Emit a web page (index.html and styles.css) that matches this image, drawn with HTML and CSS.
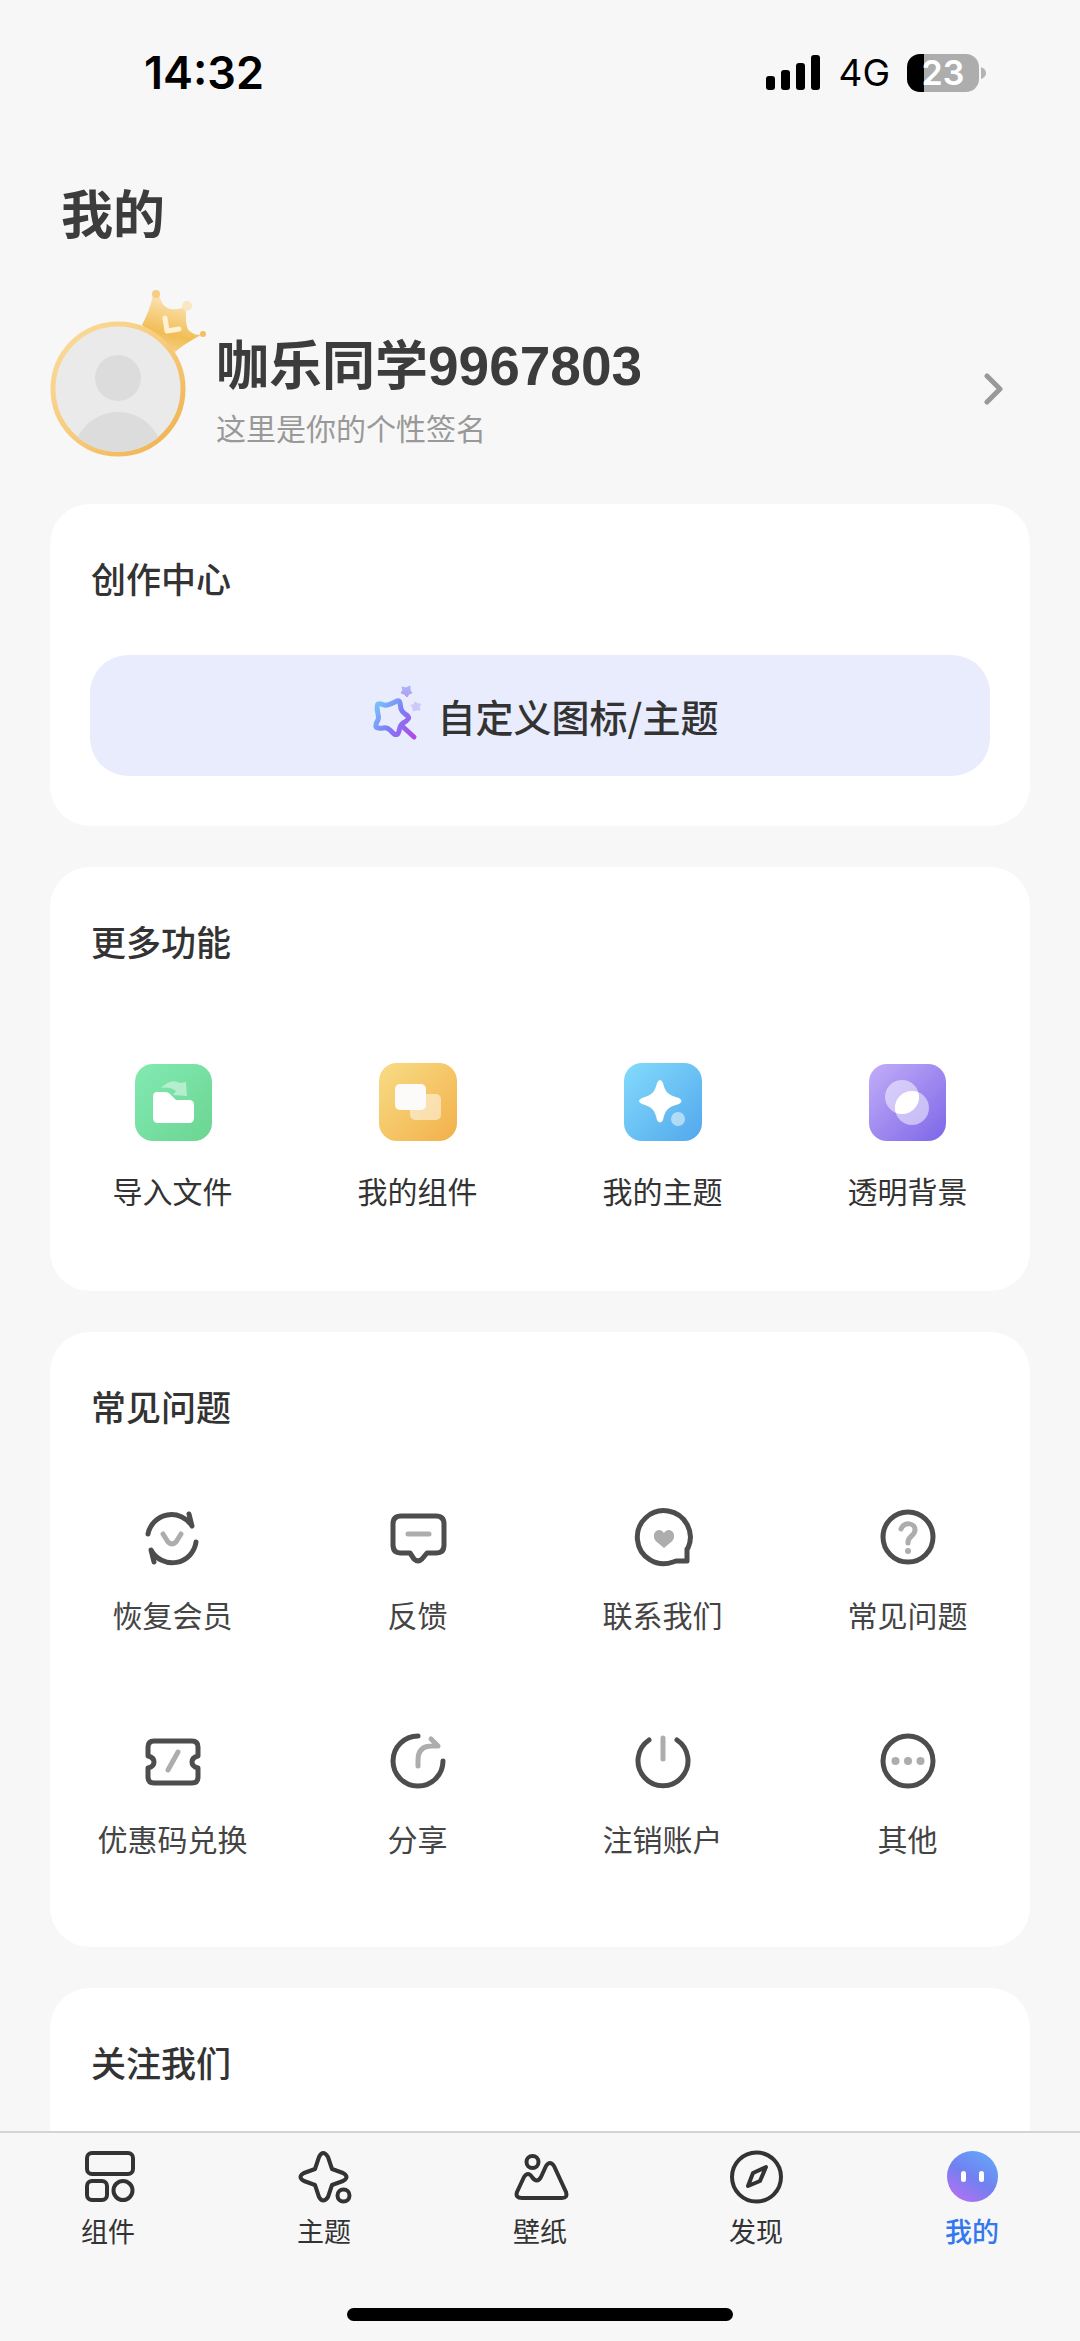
FILE: index.html
```html
<!DOCTYPE html>
<html lang="zh-CN">
<head>
<meta charset="utf-8">
<meta name="viewport" content="width=device-width, initial-scale=1">
<title>我的</title>
<link rel="stylesheet" href="styles.css">
</head>
<body>
<div class="status">
  <span class="time">14:32</span>
  <div class="status-right">
    <svg class="signal" viewBox="0 0 55 36" aria-hidden="true"><rect y="21" width="9" height="14" rx="3"/><rect x="15" y="15" width="9" height="20" rx="3"/><rect x="30" y="8" width="9" height="27" rx="3"/><rect x="45" width="9" height="35" rx="3"/></svg>
    <span class="network">4G</span>
    <div class="battery"><span class="battery-level">23</span></div>
    <svg class="battery-cap" viewBox="0 0 5 12" aria-hidden="true"><path d="M0 0Q5 2 5 6T0 12z"/></svg>
  </div>
</div>

<main class="content">
  <h1 class="page-title">我的</h1>

  <a class="profile" href="#profile">
    <svg class="avatar" viewBox="0 0 158 168" aria-hidden="true">
      <defs>
        <linearGradient id="ring" x1="0" y1="0" x2="1" y2="1"><stop offset="0" stop-color="#f9dc9f"/><stop offset=".5" stop-color="#f7cb7b"/><stop offset="1" stop-color="#efae4c"/></linearGradient>
        <linearGradient id="crown" x1=".65" y1="0" x2=".4" y2="1"><stop offset="0" stop-color="#fcebcb"/><stop offset=".3" stop-color="#f8d692"/><stop offset=".7" stop-color="#f1bd55"/><stop offset="1" stop-color="#f6d188"/></linearGradient>
        <clipPath id="face"><circle cx="68" cy="99" r="63"/></clipPath>
      </defs>
      <path d="M92 35Q100 20 103 5L109 5Q112 17 120 19Q127 20 132 18L136 20Q135 40 141 42Q144 45 151 45Q134 54 125 62z" fill="url(#crown)"/>
      <circle cx="106" cy="4" r="4" fill="#f6cd84"/><circle cx="137" cy="16" r="5" fill="#fbe6c2"/><circle cx="153" cy="44" r="3" fill="#f2c063"/>
      <path d="M115 28L117 41L129 39" fill="none" stroke="#fff1d4" stroke-width="5" stroke-linecap="round" stroke-linejoin="round"/>
      <circle cx="68" cy="99" r="65" fill="#eaeaea" stroke="url(#ring)" stroke-width="5"/>
      <g fill="#dcdcdc" clip-path="url(#face)"><circle cx="68" cy="88" r="23"/><circle cx="68" cy="167" r="45"/></g>
    </svg>
    <div class="profile-text">
      <span class="profile-name">咖乐同学<span class="digits">9967803</span></span>
      <span class="profile-bio">这里是你的个性签名</span>
    </div>
    <svg class="chevron" viewBox="0 0 20 32" aria-hidden="true"><path d="M3 3L16 16L3 29"/></svg>
  </a>

  <section class="card card-create">
    <h2 class="card-title">创作中心</h2>
    <button class="custom" type="button">
      <svg class="wand" viewBox="-8 0 64 64" aria-hidden="true">
        <defs>
          <linearGradient id="wand" gradientUnits="userSpaceOnUse" x1="4" y1="22" x2="44" y2="52"><stop offset="0" stop-color="#78c4fb"/><stop offset=".5" stop-color="#7d7df5"/><stop offset="1" stop-color="#b04ae8"/></linearGradient>
          <linearGradient id="spark" x1="0" y1="0" x2="0" y2="1"><stop offset="0" stop-color="#a5b7f8"/><stop offset="1" stop-color="#b79af2"/></linearGradient>
        </defs>
        <path d="M25 18Q29 15 30 19L31 25Q32 28 35 30Q40 33 38 35Q37 37 33 39Q30 41 29 47Q28 52 24 50L20 46Q17 43 13 44Q5 45 6 41Q6 39 8 36Q9 34 8 30Q6 21 8 20Q10 19 14 21Q17 22 25 18z" fill="none" stroke="url(#wand)" stroke-width="5" stroke-linejoin="round"/>
        <path d="M32 42L44 53" stroke="url(#wand)" stroke-width="5" stroke-linecap="round"/>
        <path d="M32 3L36 4L40 2L40 6L42 9L39 10L37 13L34 10L31 9L33 6z" fill="url(#spark)" stroke="url(#spark)" stroke-width="1" stroke-linejoin="round"/>
        <path d="M45 18L48 20L51 20L49 23L50 26L46 26L43 27L43 24L41 21L44 21z" fill="#cfc7fa" stroke="#cfc7fa" stroke-width="1" stroke-linejoin="round"/>
      </svg>
      <span>自定义图标/主题</span>
    </button>
  </section>

  <section class="card card-more">
    <h2 class="card-title">更多功能</h2>
    <div class="grid">
      <a class="item item-tile" href="#import"><svg class="tile" viewBox="0 0 78 78" aria-hidden="true"><defs><linearGradient id="g1" x1="0" y1="0" x2="1" y2="1"><stop offset="0" stop-color="#82eab2"/><stop offset="1" stop-color="#6bd592"/></linearGradient></defs><rect x="1" y="1" width="77" height="77" rx="18" fill="url(#g1)"/><path d="M27 25Q37 15 46 20L52 19L53 33L39 32L42 28Q36 23 27 25z" fill="#fff" fill-opacity=".45"/><path d="M23 29H31Q34 29 36 31L42 37H55Q60 37 60 42V55Q60 60 55 60H24Q19 60 19 55V34Q19 29 23 29z" fill="#fff"/></svg><span>导入文件</span></a>
      <a class="item item-tile" href="#widgets"><svg class="tile" viewBox="0 0 78 78" aria-hidden="true"><defs><linearGradient id="g2" x1="0" y1="0" x2="1" y2="1"><stop offset="0" stop-color="#f8dc85"/><stop offset="1" stop-color="#f2b04a"/></linearGradient></defs><rect width="78" height="78" rx="18" fill="url(#g2)"/><rect x="31" y="31" width="31" height="26" rx="5" fill="#fff" fill-opacity=".5"/><rect x="16" y="21" width="31" height="26" rx="5" fill="#fdfbfa"/></svg><span>我的组件</span></a>
      <a class="item item-tile" href="#themes"><svg class="tile" viewBox="0 0 78 78" aria-hidden="true"><defs><linearGradient id="g3" x1="0" y1="0" x2="1" y2="1"><stop offset="0" stop-color="#83dbfc"/><stop offset="1" stop-color="#52a8ec"/></linearGradient></defs><rect width="78" height="78" rx="18" fill="url(#g3)"/><path d="M33 20Q36 14 39 20C41 28 43 32 55 35Q60 38 55 41C43 44 41 48 39 57Q36 62 33 57C31 48 29 44 18 41Q12 38 18 35C29 32 31 28 33 20z" fill="#fff"/><circle cx="54" cy="56" r="7" fill="#fff" fill-opacity=".5"/></svg><span>我的主题</span></a>
      <a class="item item-tile" href="#transparent"><svg class="tile" viewBox="0 0 78 78" aria-hidden="true"><defs><linearGradient id="g4" x1="0" y1="0" x2="1" y2="1"><stop offset="0" stop-color="#c2aef8"/><stop offset="1" stop-color="#7d66e8"/></linearGradient><clipPath id="lens"><circle cx="33" cy="34" r="17"/></clipPath></defs><rect y="1" width="77" height="77" rx="18" fill="url(#g4)"/><circle cx="33" cy="34" r="17" fill="#fff" fill-opacity=".5"/><circle cx="43" cy="45" r="17" fill="#fff" fill-opacity=".5"/><circle cx="43" cy="45" r="17" fill="#fff" clip-path="url(#lens)"/></svg><span>透明背景</span></a>
    </div>
  </section>

  <section class="card card-faq">
    <h2 class="card-title">常见问题</h2>
    <div class="grid">
      <a class="item" href="#restore"><svg class="line" viewBox="0 0 64 64" aria-hidden="true"><path d="M7 29A24 24 0 0 1 51 21L48 9M55 37A24 24 0 0 1 10 45L13 57"/><path class="soft" d="M22 29L27 37Q31 41 35 37L40 29"/></svg><span>恢复会员</span></a>
      <a class="item" href="#feedback"><svg class="line" viewBox="0 0 64 64" aria-hidden="true"><path d="M15 11H50Q58 11 58 19V40Q58 48 50 48H41L36 54Q32 58 28 54L24 48H15Q7 48 7 40V19Q7 11 15 11z"/><path class="soft" d="M22 29H43"/></svg><span>反馈</span></a>
      <a class="item" href="#contact"><svg class="line" viewBox="0 0 64 64" aria-hidden="true"><path d="M56 44V56H45L42 57A26.500 26.500 0 1 1 57 43z"/><path class="soft-fill" d="M33 28C29 22 22 26 23 32Q23 35 27 38L33 43L39 38Q43 35 43 32C44 26 37 22 33 28z"/></svg><span>联系我们</span></a>
      <a class="item" href="#questions"><svg class="line" viewBox="0 0 64 64" aria-hidden="true"><circle cx="32" cy="32" r="25"/><path class="soft" d="M25 24C28 17 39 17 39 25C39 31 32 31 32 37V38"/><circle class="soft-fill" cx="32" cy="46" r="3"/></svg><span>常见问题</span></a>
      <a class="item" href="#redeem"><svg class="line" viewBox="0 0 64 64" aria-hidden="true"><path d="M13 12H51Q57 12 57 18V27C49 29 49 37 57 39V48Q57 54 51 54H13Q7 54 7 48V39C15 37 15 29 7 27V18Q7 12 13 12z"/><path class="soft" d="M37 23L27 41"/></svg><span>优惠码兑换</span></a>
      <a class="item" href="#share"><svg class="line" viewBox="0 0 64 64" aria-hidden="true"><path d="M32 7A25 25 0 1 0 57 32"/><path class="soft" d="M32 37V31Q32 17 46 17H52L45 10"/></svg><span>分享</span></a>
      <a class="item" href="#close-account"><svg class="line" viewBox="0 0 64 64" aria-hidden="true"><path d="M18 11A25 25 0 1 0 46 11"/><path class="soft" d="M32 9V30"/></svg><span>注销账户</span></a>
      <a class="item" href="#other"><svg class="line" viewBox="0 0 64 64" aria-hidden="true"><circle cx="32" cy="32" r="25"/><g class="soft-fill"><circle cx="19.500" cy="32" r="4"/><circle cx="32" cy="32" r="4"/><circle cx="44.500" cy="32" r="4"/></g></svg><span>其他</span></a>
    </div>
  </section>

  <section class="card card-follow">
    <h2 class="card-title">关注我们</h2>
  </section>
</main>

<nav class="tabs">
  <div class="tab-row">
    <a class="tab" href="#tab-widgets"><svg class="tab-icon" viewBox="0 0 60 60" aria-hidden="true"><rect x="9" y="6" width="46" height="21" rx="5"/><rect x="9" y="34" width="20" height="19" rx="5"/><circle cx="45" cy="43.500" r="9.500"/></svg><span>组件</span></a>
    <a class="tab" href="#tab-themes"><svg class="tab-icon" viewBox="0 0 60 60" aria-hidden="true"><path d="M25 10Q29 2 34 10L38 22L49 26Q56 30 49 34L38 38L34 50Q29 57 25 50L21 38L10 34Q3 30 10 26L21 22z"/><circle cx="49.500" cy="48.500" r="6"/></svg><span>主题</span></a>
    <a class="tab" href="#tab-wallpapers"><svg class="tab-icon" viewBox="0 0 60 60" aria-hidden="true"><circle cx="22.500" cy="15" r="6"/><path d="M7 45L14 30Q18 24 22 30Q27 37 31 30L36 19Q40 13 44 19L56 45Q58 51 52 51H12Q5 51 7 45z"/></svg><span>壁纸</span></a>
    <a class="tab" href="#tab-discover"><svg class="tab-icon" viewBox="0 0 60 60" aria-hidden="true"><circle cx="30.500" cy="30" r="24.500"/><path d="M40 20L34 34L22 39L27 26z"/></svg><span>发现</span></a>
    <a class="tab tab-active" href="#tab-mine" aria-current="page"><svg class="tab-icon" viewBox="0 0 60 60" aria-hidden="true"><defs><linearGradient id="mine" x1=".2" y1="1" x2=".8" y2=".05"><stop offset="0" stop-color="#b670f2"/><stop offset=".5" stop-color="#7280f0"/><stop offset="1" stop-color="#64a4f8"/></linearGradient></defs><g stroke="none"><circle cx="30.500" cy="29.500" r="25.500" fill="url(#mine)"/><rect x="19" y="24" width="5" height="11" rx="2.500" fill="#fff"/><rect x="37" y="24" width="5" height="11" rx="2.500" fill="#fff"/></g></svg><span>我的</span></a>
  </div>
  <div class="home-bar"></div>
</nav>
</body>
</html>
```
FILE: styles.css
```css
* {
  box-sizing: border-box;
}

body {
  display: flex;
  flex-direction: column;
  height: 100vh;
  margin: 0;
  background: #f7f7f7;
  color: #333;
  font-family: "Noto Sans CJK SC", sans-serif;
}

a {
  color: inherit;
  text-decoration: none;
}

h1,
h2 {
  margin: 0;
}

svg {
  display: block;
  flex: none;
}

/* Status bar */
.status {
  display: flex;
  flex: none;
  align-items: center;
  justify-content: space-between;
  height: 145px;
  padding: 0 94px 0 144px;
  color: #000;
  font-family: Inter, sans-serif;
}

.time {
  font-size: 45px;
  font-weight: 600;
}

.status-right {
  display: flex;
  align-items: center;
}

.signal {
  width: 55px;
  height: 36px;
}

.network {
  margin: 0 17px;
  font-size: 37px;
}

.battery {
  width: 72px;
  height: 38px;
  border-radius: 13px;
  background: linear-gradient(90deg, #000 17px, #adadad 17px);
  color: #fff;
  font-size: 34px;
  font-weight: 600;
  line-height: 38px;
  text-align: center;
}

.battery-cap {
  width: 5px;
  height: 12px;
  margin-left: 2px;
  fill: #b4b4b4;
}

/* Page */
.content {
  flex: 1;
  min-height: 0;
  padding: 37px 50px 0;
  overflow-y: auto;
  scrollbar-width: none;
}

.page-title {
  padding-left: 11px;
  color: #3c3c3c;
  font-size: 52px;
  font-weight: 700;
  line-height: 60px;
}

.profile {
  display: flex;
  align-items: center;
  margin: 48px 0 46px;
  padding-right: 26px;
}

.avatar {
  width: 158px;
  height: 168px;
}

.profile-text {
  display: flex;
  flex: 1;
  flex-direction: column;
  gap: 9px;
  padding: 29px 0 0 8px;
}

.profile-name {
  color: #3c3c3c;
  font-size: 53px;
  font-weight: 700;
  line-height: 64px;
}

.digits {
  font-family: "Liberation Sans", sans-serif;
  font-size: 55px;
}

.profile-bio {
  color: #999;
  font-size: 30px;
  line-height: 40px;
}

.chevron {
  width: 20px;
  height: 32px;
  margin-top: 30px;
  fill: none;
  stroke: #999;
  stroke-width: 5;
  stroke-linecap: round;
  stroke-linejoin: round;
}

/* Cards */
.card {
  margin-bottom: 41px;
  padding: 48px 0 50px;
  border-radius: 40px;
  background: #fff;
}

.card-title {
  padding: 0 41px;
  font-size: 35px;
  font-weight: 500;
  line-height: 52px;
}

.custom {
  display: flex;
  align-items: center;
  justify-content: center;
  gap: 12px;
  width: calc(100% - 80px);
  height: 121px;
  margin: 51px 40px 0;
  padding: 0;
  border: 0;
  border-radius: 38px;
  background: #e8ecfd;
  color: #333;
  font-family: inherit;
  font-size: 38px;
  font-weight: 500;
}

.wand {
  width: 64px;
  height: 64px;
}

.card-more {
  padding-bottom: 80px;
}

.card-more .grid {
  margin-top: 96px;
}

.card-faq {
  padding-bottom: 88px;
}

.card-faq .grid {
  margin-top: 73px;
}

.card-follow {
  padding-bottom: 120px;
}

.grid {
  display: grid;
  grid-template-columns: repeat(4, 1fr);
  row-gap: 94px;
}

.item {
  display: flex;
  flex-direction: column;
  align-items: center;
  gap: 24px;
  color: #444;
  font-size: 30px;
  line-height: 42px;
}

.item-tile {
  gap: 28px;
  color: #333;
}

.tile {
  width: 78px;
  height: 78px;
}

.line {
  width: 64px;
  height: 64px;
  fill: none;
  stroke: #4d4d4d;
  stroke-width: 5;
  stroke-linecap: round;
  stroke-linejoin: round;
}

.soft {
  stroke: #adadad;
}

.soft-fill {
  fill: #adadad;
  stroke: none;
}

/* Bottom tabs */
.tabs {
  flex: none;
  padding: 14px 0 20px;
  border-top: 2px solid #d4d4d4;
}

.tab-row {
  display: grid;
  grid-template-columns: repeat(5, 1fr);
}

.tab {
  display: flex;
  flex-direction: column;
  align-items: center;
  gap: 5px;
  font-size: 27px;
  line-height: 38px;
}

.tab-icon {
  width: 60px;
  height: 60px;
  fill: none;
  stroke: #333;
  stroke-width: 4;
  stroke-linejoin: round;
}

.tab-active {
  color: #3478f0;
  font-weight: 500;
}

.home-bar {
  width: 386px;
  height: 13px;
  margin: 58px auto 0;
  border-radius: 7px;
  background: #000;
}
```
